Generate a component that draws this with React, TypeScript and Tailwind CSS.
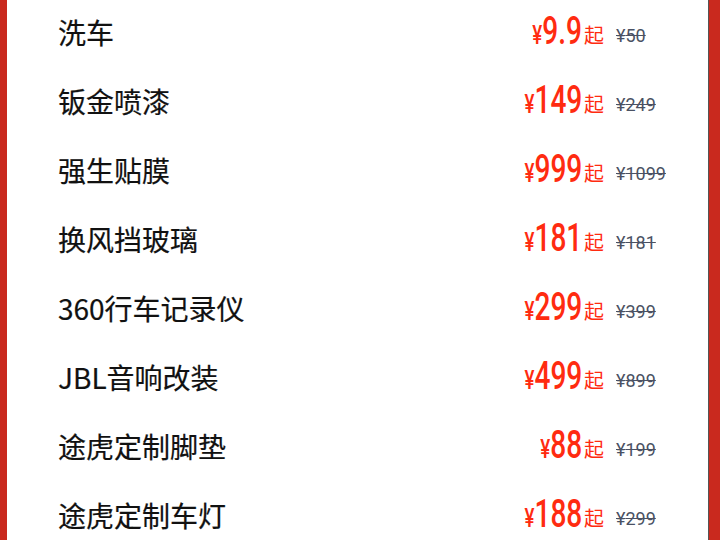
import React from "react";

const items = [
  { name: "洗车", price: "9.9", orig: "50" },
  { name: "钣金喷漆", price: "149", orig: "249" },
  { name: "强生贴膜", price: "999", orig: "1099" },
  { name: "换风挡玻璃", price: "181", orig: "181" },
  { name: "360行车记录仪", price: "299", orig: "399" },
  { name: "JBL音响改装", price: "499", orig: "899" },
  { name: "途虎定制脚垫", price: "88", orig: "199" },
  { name: "途虎定制车灯", price: "188", orig: "299" },
];

export default function App() {
  return (
    <div className="w-[720px] h-[540px] overflow-hidden flex bg-white">
      <div className="w-[7px] h-full bg-[#c9291e]" />
      <div className="flex-1 flex flex-col -mt-[3px]">
        {items.map((it) => (
          <div key={it.name} className="h-[69px] shrink-0 flex items-center">
            <div
              className="pl-[51px] w-[400px] text-[28px] font-normal text-[#111111] leading-none [-webkit-text-stroke:0.2px_#111]"
              style={{ fontFamily: '"Noto Sans CJK SC", sans-serif' }}
            >
              {it.name}
            </div>
            <div className="w-[175px] flex justify-end items-baseline">
              <span
                className="inline-block origin-right scale-x-[0.72] text-[#ff2b10] whitespace-nowrap leading-none font-medium"
                style={{ fontFamily: 'Roboto, sans-serif' }}
              >
                <span className="text-[26px]">¥</span>
                <span className="text-[39px]">{it.price}</span>
              </span>
            </div>
            <span
              className="ml-[2px] text-[20px] text-[#ff2b10] leading-none translate-y-[3px]"
              style={{ fontFamily: '"Noto Sans CJK SC", sans-serif' }}
            >
              起
            </span>
            <span
              className="ml-[12px] text-[18px] text-[#4a5163] line-through leading-none translate-y-[4px]"
              style={{ fontFamily: 'Roboto, sans-serif' }}
            >
              ¥{it.orig}
            </span>
          </div>
        ))}
      </div>
      <div className="w-[1px] h-full bg-[#555555]" />
      <div className="w-[11px] h-full bg-[#c9291e]" />
    </div>
  );
}
